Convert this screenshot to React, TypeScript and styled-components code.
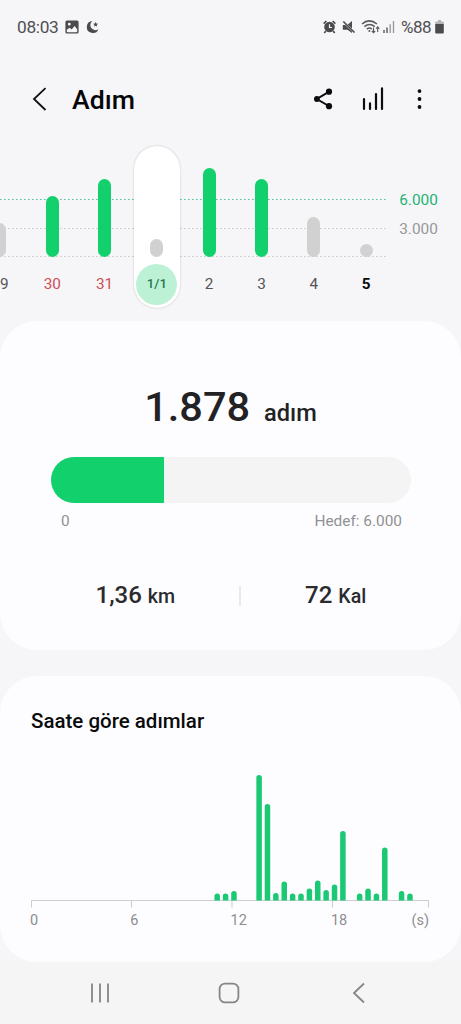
import React from 'react';
import styled, { createGlobalStyle, css } from 'styled-components';

const GREEN = '#12d16d';

const GlobalStyle = createGlobalStyle`
  * { box-sizing: border-box; }
  body { margin: 0; background: #f6f6f8; font-family: Roboto, "Noto Sans", sans-serif; }
  svg { display: block; }
`;

const Screen = styled.div`
  width: 461px;
  height: 1024px;
  overflow: hidden;
  display: flex;
  flex-direction: column;
  background: #f6f6f8;
`;

const StatusBar = styled.div`
  height: 53px;
  padding: 0 17px 0 17px;
  display: flex;
  align-items: center;
  justify-content: space-between;
  color: #505052;
  font-size: 17.3px;
  line-height: 20px;
`;

const StatusGroup = styled.div`
  display: flex;
  align-items: center;
`;

const Clock = styled.span`
  width: 48px;
  letter-spacing: -0.3px;
  white-space: nowrap;
`;

const Battery = styled.span`
  width: 32px;
  margin-left: 6px;
  font-size: 17px;
  letter-spacing: -0.5px;
  white-space: nowrap;
`;

const StatusIcon = styled.svg<{ $gap?: number }>`
  flex: none;
  margin-left: ${p => p.$gap ?? 0}px;
`;

const AppBar = styled.header`
  height: 92px;
  padding: 0 34px 0 30px;
  display: flex;
  align-items: center;
`;

const Title = styled.h1`
  margin: 2px 0 0 23px;
  flex: 1;
  font-size: 26.7px;
  line-height: 32px;
  font-weight: 500;
  color: #060608;
`;

const Actions = styled.div`
  display: flex;
  align-items: center;
  gap: 27px;
`;

const Week = styled.section`
  position: relative;
  height: 176px;
  display: flex;
`;

const GridLines = styled.svg`
  position: absolute;
  left: 0;
  top: 0;
`;

const Days = styled.div`
  position: relative;
  flex: none;
  width: 418.4px;
  margin-left: -26.2px;
  display: grid;
  grid-template-columns: repeat(8, 52.3px);
  justify-items: center;
`;

const Day = styled.div<{ $selected?: boolean }>`
  width: 46px;
  height: 162px;
  margin-top: 0.5px;
  padding-bottom: 3px;
  display: flex;
  flex-direction: column;
  align-items: center;
  justify-content: flex-end;
  border-radius: 23px;
  ${p => p.$selected && css`
    background: #fff;
    box-shadow: 0 0 2px rgba(0, 0, 0, 0.24);
  `}
`;

const DayBar = styled.div<{ $h: number; $reached?: boolean }>`
  width: 13px;
  height: ${p => p.$h}px;
  border-radius: 6.5px;
  background: ${p => (p.$reached ? GREEN : '#d1d1d2')};
`;

type Tone = 'plain' | 'holiday' | 'selected' | 'today';

const toneColor: Record<Tone, string> = {
  plain: '#545457',
  holiday: '#cf4c56',
  selected: '#277a52',
  today: '#0b0b0d',
};

const DayLabel = styled.div<{ $tone: Tone }>`
  width: 41px;
  height: 41px;
  margin-top: 7px;
  padding-bottom: 1px;
  display: flex;
  align-items: center;
  justify-content: center;
  border-radius: 50%;
  background: ${p => (p.$tone === 'selected' ? '#bcf1d6' : 'transparent')};
  color: ${p => toneColor[p.$tone]};
  font-size: ${p => (p.$tone === 'selected' ? 13.2 : 15.3)}px;
  font-weight: ${p => (p.$tone === 'today' ? 700 : p.$tone === 'selected' ? 500 : 400)};
`;

const Scale = styled.div`
  padding: 45px 0 0 7px;
  display: flex;
  flex-direction: column;
  gap: 9px;
`;

const ScaleLabel = styled.span<{ $goal?: boolean }>`
  font-size: 15.4px;
  line-height: 20px;
  color: ${p => (p.$goal ? '#1fb277' : '#98989b')};
`;

const Card = styled.section`
  background: #fdfdff;
  border-radius: 37px;
  flex: none;
`;

const SummaryCard = styled(Card)`
  height: 329px;
  padding-top: 62px;
`;

const StepCount = styled.div`
  display: flex;
  align-items: baseline;
  justify-content: center;
  gap: 14px;
  color: #222225;
  font-weight: 500;
  font-size: 41.5px;
  line-height: 48px;
`;

const StepUnit = styled.span`
  font-size: 23.6px;
`;

const Track = styled.div`
  width: 360px;
  height: 46px;
  margin: 20px 0 0 51px;
  border-radius: 23px;
  background: #f4f4f5;
  overflow: hidden;
`;

const Fill = styled.div`
  height: 100%;
  background: ${GREEN};
`;

const TrackLabels = styled.div`
  margin: 8px 59px 0 61px;
  display: flex;
  justify-content: space-between;
  font-size: 15.4px;
  line-height: 20px;
  color: #919194;
`;

const Stats = styled.div`
  margin-top: 49px;
  display: grid;
  grid-template-columns: 239px 2px 189px;
  align-items: center;
`;

const Stat = styled.div<{ $indent: number }>`
  padding-left: ${p => p.$indent}px;
  display: flex;
  align-items: baseline;
  gap: 6px;
  color: #2b2b2e;
  font-weight: 500;
  font-size: 24px;
  line-height: 30px;
  white-space: nowrap;
`;

const StatUnit = styled.span`
  font-size: 19.6px;
`;

const Divider = styled.div`
  height: 20px;
  background: #e9e9eb;
`;

const HourlyCard = styled(Card)`
  height: 286px;
  margin-top: 26px;
  padding: 33px 31px 0;
`;

const CardTitle = styled.h2`
  margin: 0;
  font-size: 20.5px;
  line-height: 24px;
  font-weight: 500;
  color: #0a0a0c;
`;

const HourChart = styled.svg`
  margin-top: 36px;
`;

const HourLabels = styled.div`
  width: 399px;
  margin: 3px 0 0 -1px;
  display: grid;
  grid-template-columns: 100.3px 100.3px 100.3px 1fr auto;
  font-size: 14.5px;
  line-height: 20px;
  color: #8d8d90;
`;

const NavBar = styled.nav`
  flex: 1;
  padding: 0 93px 0 89px;
  display: flex;
  align-items: center;
  justify-content: space-between;
  background: #f5f5f5;
`;

const days: { label: string; h: number; reached?: boolean; tone: Tone }[] = [
  { label: '29', h: 34, tone: 'plain' },
  { label: '30', h: 60.5, reached: true, tone: 'holiday' },
  { label: '31', h: 77.5, reached: true, tone: 'holiday' },
  { label: '1/1', h: 18, tone: 'selected' },
  { label: '2', h: 88.5, reached: true, tone: 'plain' },
  { label: '3', h: 77.5, reached: true, tone: 'plain' },
  { label: '4', h: 40, tone: 'plain' },
  { label: '5', h: 13, tone: 'today' },
];

// Heights of the half-hour bars, starting at the first slot with steps.
const slots = [
  7, 7, 9.5, 0, 0, 125.5, 96.5, 7.5, 19, 7, 7, 12, 20, 10.5, 16, 69.5,
  0, 7, 12, 7, 53, 0, 9.5, 7,
];
const FIRST_SLOT_X = 186.2;
const SLOT_STEP = 8.38;
const BASELINE = 131.5;

function barPath(x: number, h: number) {
  const r = 2.75;
  return `M${x - r} ${BASELINE}V${BASELINE - h + r}a${r} ${r} 0 0 1 ${2 * r} 0V${BASELINE}z`;
}

export default function App() {
  return (
    <Screen>
      <GlobalStyle />
      <StatusBar>
        <StatusGroup>
          <Clock>08:03</Clock>
          <StatusIcon width="14" height="14" viewBox="0 0 14 14">
            <path fillRule="evenodd" fill="#4b4b4d" d="M2 .5h10A1.6 1.6 0 0 1 13.6 2v10a1.6 1.6 0 0 1-1.6 1.6H2A1.6 1.6 0 0 1 .4 12V2A1.6 1.6 0 0 1 2 .5zM1.8 9.8v1.7q0 .8.8.8h8.8q.8 0 .8-.8V9.2L9.6 6 6.7 9.5 4.7 7.7zM4.3 2.8a1.4 1.4 0 1 0 0 2.8 1.4 1.4 0 0 0 0-2.8z" />
          </StatusIcon>
          <StatusIcon $gap={7} width="14" height="14" viewBox="0 0 14 14">
            <path fill="#4b4b4d" d="M6.4 1A6 6 0 1 0 12.4 9.2 4.7 4.7 0 0 1 6.4 1z" />
            <path fill="#4b4b4d" d="M9.6 1.9l.7 1.7 1.8.2-1.4 1.2.4 1.8-1.5-1-1.6 1 .5-1.8-1.4-1.2 1.8-.2z" />
          </StatusIcon>
        </StatusGroup>
        <StatusGroup>
          <StatusIcon width="13" height="14" viewBox="0 0 13 14">
            <circle cx="6.5" cy="7" r="5.3" fill="#4b4b4d" />
            <path d="M.6 3.6L3.4 1M9.6 1l2.8 2.6M2.8 11l-1.5 2M10.2 11l1.5 2" stroke="#4b4b4d" strokeWidth="1.6" />
            <path d="M6.5 4.3v3.2H9" stroke="#f6f6f8" strokeWidth="1.2" fill="none" />
          </StatusIcon>
          <StatusIcon $gap={6} width="14" height="14" viewBox="0 0 14 14">
            <path fill="#4b4b4d" d="M.8 5h2.4L10 11.6V13L5.5 9.8H.8zM5.8 4.4L10 1v7.4z" />
            <path d="M1.3 1.5l11.2 11" stroke="#4b4b4d" strokeWidth="1.7" />
          </StatusIcon>
          <StatusIcon $gap={5} width="20" height="15" viewBox="0 0 20 15">
            <g fill="none" stroke="#59595b" strokeWidth="1.5">
              <path d="M1 5q7-6.2 15 0M3.4 7.6q5-4.2 10.4 0M5.8 10.1q2.7-2 5 0" />
              <path strokeWidth="1.1" d="M12.5 8.5v5M10.9 12l1.6 1.7 1.6-1.7M16.7 13V8M15.1 9.6l1.6-1.7 1.6 1.7" />
            </g>
            <circle cx="8.4" cy="12" r="1" fill="#59595b" />
          </StatusIcon>
          <StatusIcon $gap={2} width="12" height="13" viewBox="0 0 12 13">
            <path d="M1 10v3M4 7.5V13" stroke="#59595b" strokeWidth="1.4" />
            <path d="M7.2 4.2V13M10.5 1v12" stroke="#9b9b9d" strokeWidth="1.4" />
          </StatusIcon>
          <Battery>%88</Battery>
          <StatusIcon $gap={2} width="9" height="14" viewBox="0 0 9 14">
            <path d="M3 0h3v1.5H3zM1.2 1.4h6.6a1 1 0 0 1 1 1V5H.2V2.4a1 1 0 0 1 1-1z" fill="#b4b4b6" />
            <path d="M.2 4h8.6v8.5q0 1-1 1H1.2q-1 0-1-1z" fill="#4b4b4d" />
          </StatusIcon>
        </StatusGroup>
      </StatusBar>

      <AppBar>
        <svg width="19" height="28" viewBox="0 0 19 28">
          <path d="M15.5 3.2L4 14l11.5 11" fill="none" stroke="#111113" strokeWidth="1.8" />
        </svg>
        <Title>Adım</Title>
        <Actions>
          <svg width="20" height="24" viewBox="0 0 20 24">
            <path d="M14.8 4.8L2.8 12l12 7" fill="none" stroke="#0c0c0e" strokeWidth="2" />
            <g fill="#0c0c0e">
              <circle cx="15" cy="4.7" r="3.1" />
              <circle cx="2.9" cy="12" r="2.9" />
              <circle cx="15" cy="19.2" r="3.1" />
            </g>
          </svg>
          <svg width="24" height="24" viewBox="0 0 24 24">
            <path d="M3 12.2V22M9 16.4V22M15 7v15M21 1.4V22" stroke="#0c0c0e" strokeWidth="2.2" strokeLinecap="round" />
          </svg>
          <svg width="15" height="24" viewBox="0 0 15 24">
            <g fill="#0c0c0e">
              <circle cx="7.5" cy="4.1" r="1.9" />
              <circle cx="7.5" cy="12" r="1.9" />
              <circle cx="7.5" cy="20" r="1.9" />
            </g>
          </svg>
        </Actions>
      </AppBar>

      <Week>
        <GridLines width="386" height="120">
          <path d="M0 54.5H386" stroke="#51c49c" strokeWidth="1.2" strokeDasharray="1.6 2.4" />
          <path d="M0 83.5H386M0 111.5H386" stroke="#cbcbce" strokeWidth="1.2" strokeDasharray="1.6 2.4" />
        </GridLines>
        <Days>
          {days.map(d => (
            <Day key={d.label} $selected={d.tone === 'selected'}>
              <DayBar $h={d.h} $reached={d.reached} />
              <DayLabel $tone={d.tone}>{d.label}</DayLabel>
            </Day>
          ))}
        </Days>
        <Scale>
          <ScaleLabel $goal>6.000</ScaleLabel>
          <ScaleLabel>3.000</ScaleLabel>
        </Scale>
      </Week>

      <SummaryCard>
        <StepCount>
          1.878 <StepUnit>adım</StepUnit>
        </StepCount>
        <Track>
          <Fill style={{ width: `${(1878 / 6000) * 100}%` }} />
        </Track>
        <TrackLabels>
          <span>0</span>
          <span>Hedef: 6.000</span>
        </TrackLabels>
        <Stats>
          <Stat $indent={95.5}>
            1,36 <StatUnit>km</StatUnit>
          </Stat>
          <Divider />
          <Stat $indent={64}>
            72 <StatUnit>Kal</StatUnit>
          </Stat>
        </Stats>
      </SummaryCard>

      <HourlyCard>
        <CardTitle>Saate göre adımlar</CardTitle>
        <HourChart width="399" height="139" viewBox="0 0 399 139">
          <path
            d="M.5 138.5V131.5H397.5V138.5M100.5 131.5v7M201 131.5v7M301.5 131.5v7"
            fill="none"
            stroke="#cfcfd1"
            strokeWidth="1.1"
          />
          {slots.map((h, i) =>
            h > 0 ? <path key={i} d={barPath(FIRST_SLOT_X + i * SLOT_STEP, h)} fill="#1bc873" /> : null,
          )}
        </HourChart>
        <HourLabels>
          <span>0</span>
          <span>6</span>
          <span>12</span>
          <span>18</span>
          <span>(s)</span>
        </HourLabels>
      </HourlyCard>

      <NavBar>
        <svg width="22" height="22" viewBox="0 0 22 22">
          <path d="M3 1.5v19M11 1.5v19M19 1.5v19" stroke="#858587" strokeWidth="1.8" />
        </svg>
        <svg width="22" height="22" viewBox="0 0 22 22">
          <rect x="1.6" y="1.6" width="18.8" height="18.8" rx="5.5" fill="none" stroke="#858587" strokeWidth="1.8" />
        </svg>
        <svg width="22" height="22" viewBox="0 0 22 22">
          <path d="M18 1.5L8 11l10 9.5" fill="none" stroke="#858587" strokeWidth="1.8" />
        </svg>
      </NavBar>
    </Screen>
  );
}
